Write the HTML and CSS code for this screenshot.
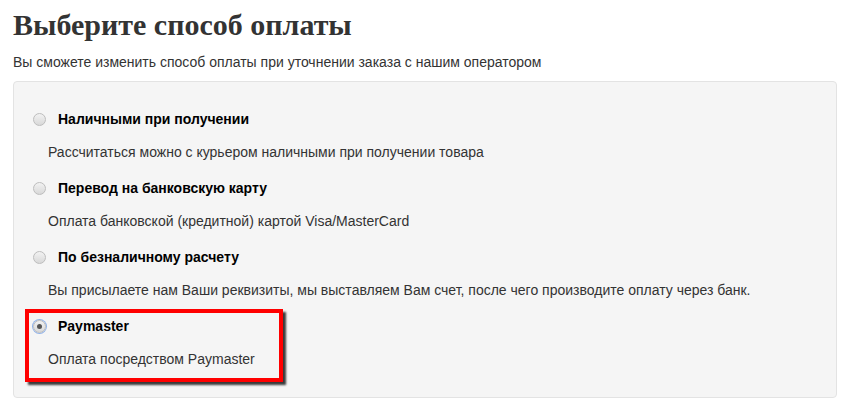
FILE: index.html
```html
<!DOCTYPE html>
<html lang="ru">
<head>
<meta charset="utf-8">
<link rel="stylesheet" href="styles.css">
</head>
<body>
<div class="page">
  <h1 class="title">Выберите способ оплаты</h1>
  <p class="subtitle">Вы сможете изменить способ оплаты при уточнении заказа с нашим оператором</p>
  <div class="panel">
    <div class="option">
      <div class="option-head"><span class="radio"></span><span class="label">Наличными при получении</span></div>
      <div class="desc">Рассчитаться можно с курьером наличными при получении товара</div>
    </div>
    <div class="option">
      <div class="option-head"><span class="radio"></span><span class="label">Перевод на банковскую карту</span></div>
      <div class="desc">Оплата банковской (кредитной) картой Visa/MasterCard</div>
    </div>
    <div class="option">
      <div class="option-head"><span class="radio"></span><span class="label">По безналичному расчету</span></div>
      <div class="desc">Вы присылаете нам Ваши реквизиты, мы выставляем Вам счет, после чего производите оплату через банк.</div>
    </div>
    <div class="option highlighted">
      <div class="option-head"><span class="radio checked"></span><span class="label">Paymaster</span></div>
      <div class="desc">Оплата посредством Paymaster</div>
    </div>
  </div>
</div>
</body>
</html>
```

FILE: styles.css
```css
html, body {
  margin: 0;
  padding: 0;
  background: #fff;
}
.page {
  padding: 0 18px 0 13px;
  font-family: "Liberation Sans", Arial, sans-serif;
  color: #333;
}
.title {
  margin: 0;
  padding-top: 7px;
  font-family: "Liberation Serif", "Times New Roman", serif;
  font-weight: bold;
  font-size: 30px;
  line-height: 36px;
  color: #333;
}
.subtitle {
  margin: 10px 0 0;
  font-size: 14px;
  line-height: 18px;
}
.panel {
  margin-top: 10px;
  background: #f5f5f5;
  border: 1px solid #e3e3e3;
  border-radius: 4px;
  height: 317px;
  box-sizing: border-box;
  padding: 28px 0 0 19px;
}
.option {
  height: 69px;
  box-sizing: border-box;
  white-space: nowrap;
}
.option-head {
  display: flex;
  align-items: center;
  height: 18px;
}
.radio {
  width: 11px;
  height: 11px;
  border-radius: 50%;
  border: 1px solid #bdbdbd;
  background: linear-gradient(#f2f2f2, #d8d8d8);
  margin-right: 12px;
  flex: none;
}
.radio.checked {
  position: relative;
  box-shadow: 0 0 0 1px #8fb2ea;
}
.radio.checked::after {
  content: "";
  position: absolute;
  left: 3px;
  top: 3px;
  width: 5px;
  height: 5px;
  border-radius: 50%;
  background: #555;
}
.label {
  font-weight: bold;
  font-size: 14px;
  color: #000;
}
.desc {
  margin-top: 15px;
  padding-left: 15px;
  font-size: 14px;
  line-height: 18px;
}
.highlighted {
  width: 258px;
  height: 73px;
  border: 4px solid #ff0000;
  box-shadow: 3px 3px 2px #3a3a3a;
  margin-left: -8px;
  margin-top: -8px;
  padding-left: 4px;
  padding-top: 4px;
}
```
